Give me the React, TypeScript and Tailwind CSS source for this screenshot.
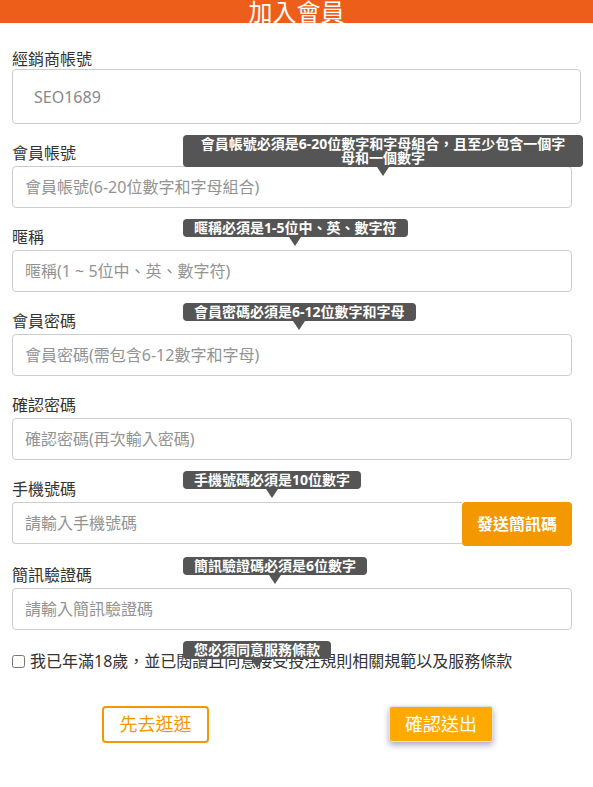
import React from 'react';

const font = { fontFamily: '"Noto Sans", "Noto Sans CJK TC", sans-serif' };

type TipProps = { children: React.ReactNode; wide?: boolean };

// dark hint bubble with a small arrow under it
const Tip = ({ children, wide }: TipProps) => (
  <div className="absolute left-[171px] top-[-8px] z-10 flex flex-col items-center">
    <div
      className={
        'rounded-[4px] bg-[#555555] px-[11px] py-[2px] text-center text-[14px] font-bold leading-[14px] text-white ' +
        (wide ? 'w-[400px]' : 'whitespace-nowrap')
      }
    >
      {children}
    </div>
    <div className="h-0 w-0 border-x-[6px] border-t-[9px] border-x-transparent border-t-[#555555]" />
  </div>
);

const Field = ({
  label,
  placeholder,
  tip,
  wide,
}: {
  label: string;
  placeholder: string;
  tip?: React.ReactNode;
  wide?: boolean;
}) => (
  <div className="relative mt-[19px]">
    <label className="mb-[2px] block text-[16px] leading-[21px] text-[#333333]">{label}</label>
    {tip && <Tip wide={wide}>{tip}</Tip>}
    <input
      placeholder={placeholder}
      className="block h-[42px] w-[560px] rounded-[4px] border border-[#cccccc] bg-white px-[12px] text-[16px] text-[#333333] outline-none placeholder:text-[#939393]"
      style={font}
    />
  </div>
);

const App = () => {
  return (
    <div className="min-h-screen bg-white" style={font}>
      {/* Title bar */}
      <div className="h-[23px] overflow-hidden bg-[#ee5e1b] text-center text-[24px] leading-[23px] text-white">
        加入會員
      </div>

      <div className="px-[12px] pt-[27px]">
        {/* Dealer account */}
        <div>
          <label className="block text-[16px] leading-[19px] text-[#333333]">經銷商帳號</label>
          <input
            readOnly
            value="SEO1689"
            className="block h-[55px] w-[569px] rounded-[4px] border border-[#cccccc] bg-white px-[21px] text-[16px] text-[#888888] outline-none"
            style={font}
          />
        </div>

        <Field
          label="會員帳號"
          placeholder="會員帳號(6-20位數字和字母組合)"
          wide
          tip={
            <>
              會員帳號必須是6-20位數字和字母組合，且至少包含一個字
              <br />
              母和一個數字
            </>
          }
        />
        <Field label="暱稱" placeholder="暱稱(1 ~ 5位中、英、數字符)" tip="暱稱必須是1-5位中、英、數字符" />
        <Field label="會員密碼" placeholder="會員密碼(需包含6-12數字和字母)" tip="會員密碼必須是6-12位數字和字母" />
        <Field label="確認密碼" placeholder="確認密碼(再次輸入密碼)" />

        {/* Phone + SMS button */}
        <div className="relative mt-[19px]">
          <label className="mb-[2px] block text-[16px] leading-[21px] text-[#333333]">手機號碼</label>
          <Tip>手機號碼必須是10位數字</Tip>
          <div className="flex w-[560px] items-start">
            <input
              placeholder="請輸入手機號碼"
              className="block h-[42px] flex-1 rounded-l-[4px] border border-r-0 border-[#cccccc] bg-white px-[12px] text-[16px] outline-none placeholder:text-[#939393]"
              style={font}
            />
            <button className="h-[44px] w-[110px] rounded-[4px] bg-[#f39800] text-[16px] font-bold text-white">
              發送簡訊碼
            </button>
          </div>
        </div>

        <Field label="簡訊驗證碼" placeholder="請輸入簡訊驗證碼" tip="簡訊驗證碼必須是6位數字" />

        {/* Agreement */}
        <div className="relative mt-[20px] flex items-center text-[16px] leading-[23px] text-[#333333]">
          <input type="checkbox" className="m-0 mr-[5px] h-[13px] w-[13px]" />
          <span>我已年滿18歲，並已閱讀且同意接受投注規則相關規範以及服務條款</span>
          <div className="absolute left-[171px] top-[-9px] z-10 flex flex-col items-center">
            <div className="whitespace-nowrap rounded-[4px] bg-[#555555] px-[11px] py-[2px] text-[14px] font-bold leading-[14px] text-white">
              您必須同意服務條款
            </div>
            <div className="h-0 w-0 border-x-[6px] border-t-[9px] border-x-transparent border-t-[#555555]" />
          </div>
        </div>

        {/* Actions */}
        <div className="mt-[33px] flex items-start gap-[180px] pl-[90px]">
          <button className="h-[37px] w-[107px] rounded-[4px] border-2 border-[#f39800] bg-white text-[18px] text-[#f39800]">
            先去逛逛
          </button>
          <button className="h-[36px] w-[104px] rounded-[3px] border border-[#e0e0e0] bg-[#ffaa00] text-[18px] text-white shadow-[0_3px_6px_rgba(70,60,130,0.45)]">
            確認送出
          </button>
        </div>
      </div>
    </div>
  );
};

export default App;
